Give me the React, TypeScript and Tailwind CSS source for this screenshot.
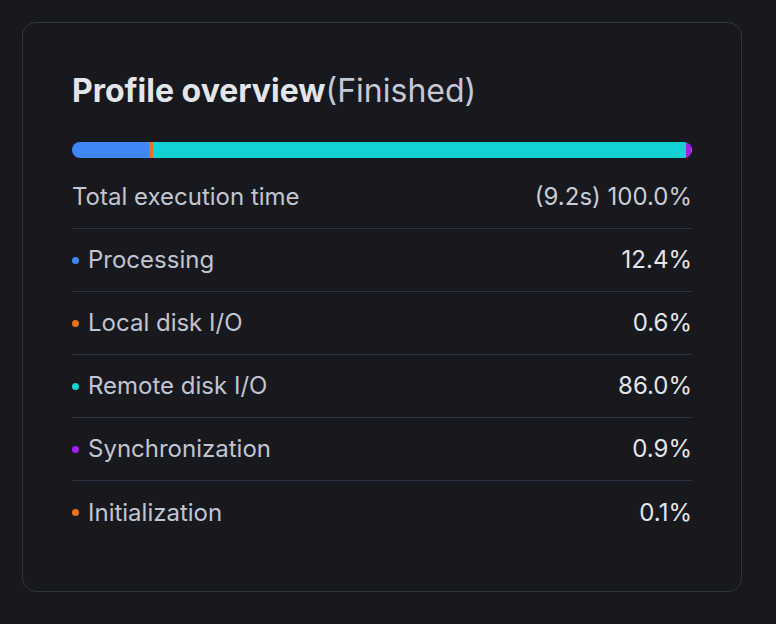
const segments = [
  { label: "Processing", value: 12.4, dot: "bg-[#3f86f7]" },
  { label: "Local disk I/O", value: 0.6, dot: "bg-[#e8731f]" },
  { label: "Remote disk I/O", value: 86.0, dot: "bg-[#14d1d4]" },
  { label: "Synchronization", value: 0.9, dot: "bg-[#a21ff0]" },
  { label: "Initialization", value: 0.1, dot: "bg-[#e8731f]" },
];

function Row({
  label,
  value,
  dot,
  muted = false,
  last = false,
}: {
  label: string;
  value: string;
  dot?: string;
  muted?: boolean;
  last?: boolean;
}) {
  return (
    <div
      className={`flex h-[63px] items-center justify-between text-[24px] ${
        last ? "" : "border-b border-[#2d3244]"
      }`}
    >
      <div className="flex items-center gap-[9px] text-[#c1c5d1]">
        {dot && <span className={`h-[7px] w-[7px] rounded-full ${dot}`} />}
        <span>{label}</span>
      </div>
      <span className={muted ? "text-[#c8ccd7]" : "text-[#e2e5ec]"}>
        {value}
      </span>
    </div>
  );
}

export default function App() {
  return (
    <div className="min-h-screen bg-[#18191e] p-[22px] font-['Inter',sans-serif]">
      <div className="w-[720px] rounded-[14px] border border-[#31343b] px-[49px] pb-[47px] pt-[49px]">
        <h2 className="text-[32px] leading-[38px] text-[#e3e5ec]">
          <span className="font-bold">Profile overview</span>
          <span className="text-[#c5c9d6]">(Finished)</span>
        </h2>

        <div className="mt-[32px] flex h-[16px] w-full overflow-hidden rounded-full">
          {segments.map((s, i) => (
            <div
              key={i}
              className={`h-full ${s.dot}`}
              style={{ width: `${s.value}%` }}
            />
          ))}
        </div>

        <div className="mt-[8px]">
          <Row label="Total execution time" value="(9.2s) 100.0%" muted />
          {segments.map((s, i) => (
            <Row
              key={s.label}
              label={s.label}
              value={`${s.value.toFixed(1)}%`}
              dot={s.dot}
              last={i === segments.length - 1}
            />
          ))}
        </div>
      </div>
    </div>
  );
}
